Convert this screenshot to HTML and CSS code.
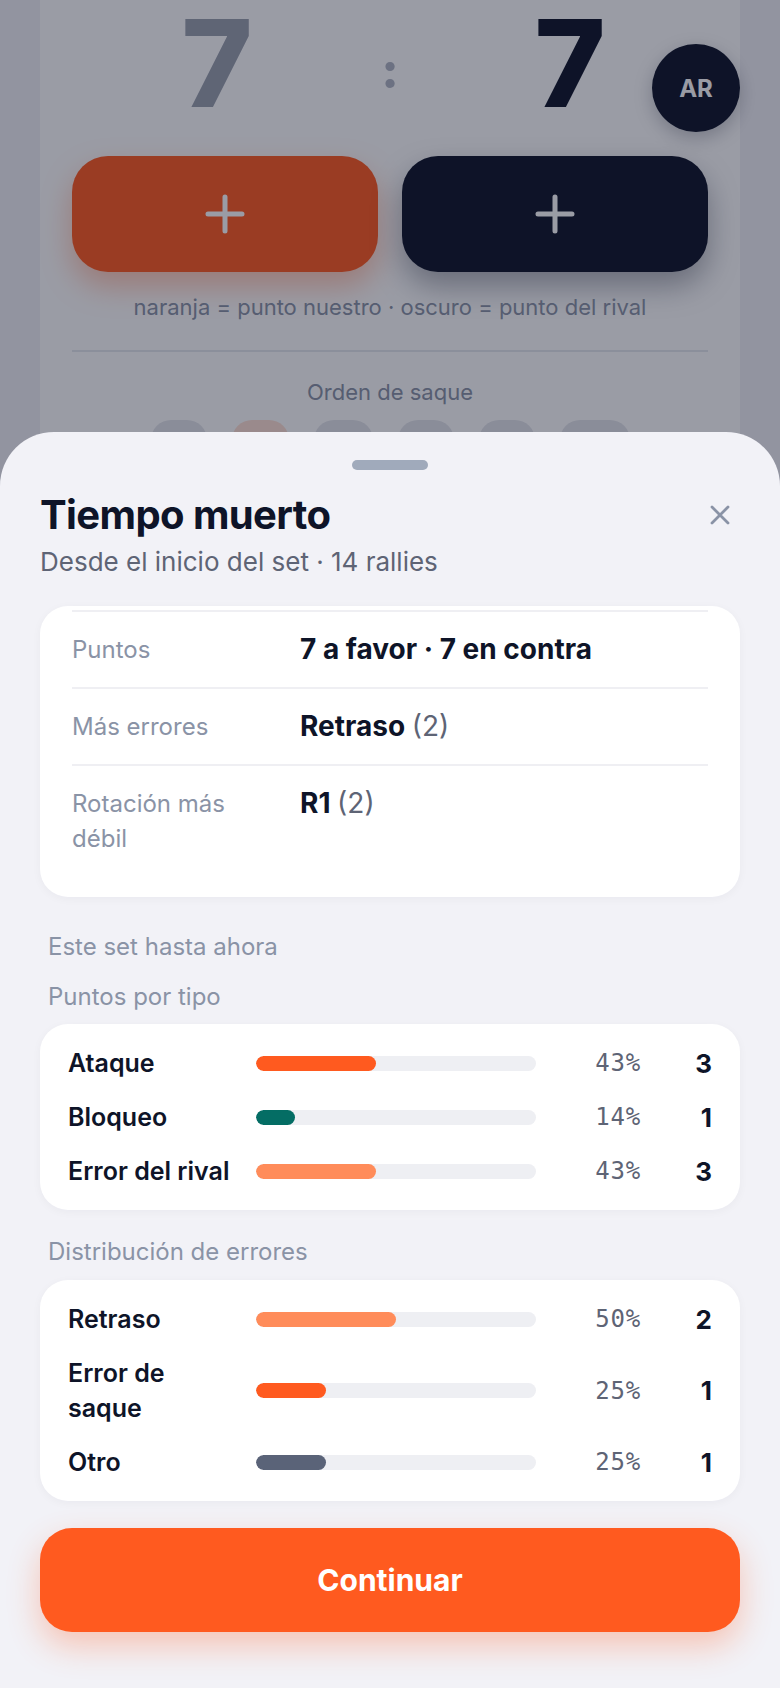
FILE: index.html
```html
<!DOCTYPE html>
<html lang="es">
<head>
<meta charset="utf-8">
<title>Tiempo muerto</title>
<link rel="stylesheet" href="styles.css">
</head>
<body>
<div class="app">
  <main class="match-card">
    <div class="score">
      <span class="score-num score-us">7</span>
      <span class="score-sep">:</span>
      <span class="score-num score-them">7</span>
    </div>
    <div class="avatar">AR</div>
    <div class="point-buttons">
      <button class="point-btn point-us" aria-label="Punto nuestro">
        <svg viewBox="0 0 40 40" width="40" height="40"><path d="M20 3v34M3 20h34" stroke="currentColor" stroke-width="5" stroke-linecap="round" fill="none"/></svg>
      </button>
      <button class="point-btn point-them" aria-label="Punto del rival">
        <svg viewBox="0 0 40 40" width="40" height="40"><path d="M20 3v34M3 20h34" stroke="currentColor" stroke-width="5" stroke-linecap="round" fill="none"/></svg>
      </button>
    </div>
    <p class="legend">naranja = punto nuestro · oscuro = punto del rival</p>
    <div class="divider"></div>
    <p class="serve-title">Orden de saque</p>
    <div class="serve-order">
      <span class="pill"></span>
      <span class="pill pill-active"></span>
      <span class="pill pill-w59"></span>
      <span class="pill"></span>
      <span class="pill"></span>
      <span class="pill pill-wide"></span>
    </div>
  </main>
</div>

<div class="scrim"></div>

<section class="sheet">
  <div class="handle"></div>
  <header class="sheet-head">
    <h1 class="sheet-title">Tiempo muerto</h1>
    <button class="close" aria-label="Cerrar">
      <svg viewBox="0 0 20 20" width="20" height="20"><path d="M2 2L18 18M18 2L2 18" stroke="currentColor" stroke-width="2.8" stroke-linecap="round" fill="none"/></svg>
    </button>
  </header>
  <p class="sheet-sub">Desde el inicio del set · 14 rallies</p>

  <div class="card summary">
    <div class="sum-row">
      <span class="sum-label">Puntos</span>
      <span class="sum-value">7 a favor · 7 en contra</span>
    </div>
    <div class="sum-row">
      <span class="sum-label">Más errores</span>
      <span class="sum-value">Retraso <span class="sum-muted">(2)</span></span>
    </div>
    <div class="sum-row">
      <span class="sum-label">Rotación más débil</span>
      <span class="sum-value">R1 <span class="sum-muted">(2)</span></span>
    </div>
  </div>

  <p class="section-label section-first">Este set hasta ahora</p>
  <p class="section-label section-sub">Puntos por tipo</p>
  <div class="card bars">
    <div class="bar-row">
      <span class="bar-label">Ataque</span>
      <span class="track"><span class="fill fill-orange" style="width:43%"></span></span>
      <span class="pct">43%</span>
      <span class="count">3</span>
    </div>
    <div class="bar-row">
      <span class="bar-label">Bloqueo</span>
      <span class="track"><span class="fill fill-teal" style="width:14%"></span></span>
      <span class="pct">14%</span>
      <span class="count">1</span>
    </div>
    <div class="bar-row">
      <span class="bar-label">Error del rival</span>
      <span class="track"><span class="fill fill-peach" style="width:43%"></span></span>
      <span class="pct">43%</span>
      <span class="count">3</span>
    </div>
  </div>

  <p class="section-label section-gap">Distribución de errores</p>
  <div class="card bars">
    <div class="bar-row">
      <span class="bar-label">Retraso</span>
      <span class="track"><span class="fill fill-peach" style="width:50%"></span></span>
      <span class="pct">50%</span>
      <span class="count">2</span>
    </div>
    <div class="bar-row">
      <span class="bar-label">Error de saque</span>
      <span class="track"><span class="fill fill-orange" style="width:25%"></span></span>
      <span class="pct">25%</span>
      <span class="count">1</span>
    </div>
    <div class="bar-row">
      <span class="bar-label">Otro</span>
      <span class="track"><span class="fill fill-slate" style="width:25%"></span></span>
      <span class="pct">25%</span>
      <span class="count">1</span>
    </div>
  </div>

  <button class="continue">Continuar</button>
</section>
</body>
</html>
```

FILE: styles.css
```css
* { box-sizing: border-box; }

html, body {
  margin: 0;
  padding: 0;
}

body {
  width: 780px;
  height: 1688px;
  overflow: hidden;
  position: relative;
  background: #f2f2f7;
  font-family: "Inter", "Noto Sans", sans-serif;
  color: #0e1428;
}

p { margin: 0; }

button {
  font-family: inherit;
  border: 0;
  padding: 0;
  cursor: pointer;
}

/* ---------- background page ---------- */
.app {
  padding: 0 40px;
}

.match-card {
  position: relative;
  background: #ffffff;
  border-radius: 0 0 32px 32px;
  padding: 3px 32px 40px;
  height: 560px;
}

.score {
  display: grid;
  grid-template-columns: 1fr 40px 1fr;
  align-items: center;
  height: 120px;
}

.score-num {
  font-size: 121px;
  line-height: 120px;
  font-weight: 800;
  text-align: center;
}

.score-us { color: #9aa0ad; margin-right: 8px; }
.score-them { color: #0e1428; margin-left: 22px; }

.score-sep {
  text-align: center;
  font-size: 50px;
  font-weight: 800;
  color: #b0b6c3;
  line-height: 1;
  padding-top: 14px;
}

.avatar {
  position: absolute;
  top: 44px;
  right: 0;
  width: 88px;
  height: 88px;
  border-radius: 50%;
  background: #0e1428;
  color: #ffffff;
  font-size: 24px;
  font-weight: 700;
  display: flex;
  align-items: center;
  justify-content: center;
  box-shadow: 0 6px 18px rgba(14, 20, 40, 0.25);
}

.point-buttons {
  margin-top: 33px;
  display: grid;
  grid-template-columns: 1fr 1fr;
  gap: 24px;
}

.point-btn {
  height: 116px;
  border-radius: 36px;
  display: flex;
  align-items: center;
  justify-content: center;
  color: #ffffff;
}

.point-us {
  background: #ff5a1f;
  box-shadow: 0 14px 30px rgba(255, 90, 31, 0.35);
}

.point-them {
  background: #0e1428;
  box-shadow: 0 14px 30px rgba(14, 20, 40, 0.35);
}

.legend {
  margin-top: 20px;
  text-align: center;
  font-size: 22px;
  line-height: 30px;
  color: #8a93a6;
}

.divider {
  margin-top: 28px;
  height: 2px;
  background: #e6e8ee;
}

.serve-title {
  margin-top: 25px;
  text-align: center;
  font-size: 22px;
  line-height: 30px;
  color: #8a93a6;
}

.serve-order {
  margin-top: 13px;
  display: flex;
  justify-content: center;
  gap: 25px;
}

.pill {
  width: 56px;
  height: 52px;
  border-radius: 20px;
  background: #e4e6eb;
}

.pill-active { width: 57px; background: #ffe1d4; }
.pill-w59 { width: 59px; }
.pill-wide { width: 70px; }

/* ---------- scrim ---------- */
.scrim {
  position: absolute;
  inset: 0;
  background: rgba(14, 20, 40, 0.42);
}

/* ---------- sheet ---------- */
.sheet {
  position: absolute;
  left: 0;
  right: 0;
  top: 432px;
  min-height: 1256px;
  background: #f2f2f7;
  border-radius: 54px 54px 0 0;
  padding: 28px 40px 40px;
}

.handle {
  width: 76px;
  height: 10px;
  border-radius: 5px;
  background: #a0aabb;
  margin: 0 auto;
}

.sheet-head {
  margin-top: 21px;
  display: flex;
  align-items: center;
  justify-content: space-between;
}

.sheet-title {
  margin: 0;
  font-size: 40px;
  line-height: 48px;
  font-weight: 700;
  letter-spacing: -0.6px;
  color: #0e1428;
}

.close {
  width: 40px;
  height: 40px;
  background: transparent;
  color: #8a93a6;
  display: flex;
  align-items: center;
  justify-content: center;
}

.sheet-sub {
  margin-top: 6px;
  font-size: 26px;
  line-height: 34px;
  color: #5e6475;
}

.card {
  background: #ffffff;
  border-radius: 28px;
  box-shadow: 0 2px 10px rgba(14, 20, 40, 0.04);
}

.summary {
  margin-top: 27px;
  padding: 4px 32px 21px;
}

.sum-row {
  display: grid;
  grid-template-columns: 200px 1fr;
  column-gap: 28px;
  border-top: 2px solid #efeff3;
  padding: 20px 0;
  align-items: start;
}

.sum-label {
  font-size: 24px;
  line-height: 35px;
  color: #8a93a6;
}

.sum-value {
  font-size: 28px;
  line-height: 35px;
  font-weight: 700;
  color: #0e1428;
}

.sum-muted {
  font-weight: 400;
  color: #5e6475;
}

.section-label {
  font-size: 24px;
  line-height: 35px;
  color: #8a93a6;
  padding-left: 8px;
}

.section-first { margin-top: 32px; }
.section-sub { margin-top: 15px; }
.section-gap { margin-top: 24px; }

.bars {
  margin-top: 10px;
  padding: 12px 28px;
}

.section-gap + .bars { margin-top: 11px; }

.bar-row {
  display: grid;
  grid-template-columns: 172px 280px 89px 55px;
  column-gap: 16px;
  align-items: center;
  padding: 9.5px 0;
}

.bar-label {
  font-size: 25px;
  line-height: 35px;
  font-weight: 600;
  color: #0e1428;
}

.track {
  display: block;
  height: 15px;
  border-radius: 8px;
  background: #eeeff3;
  overflow: hidden;
}

.fill {
  display: block;
  height: 100%;
  border-radius: 8px;
}

.fill-orange { background: #ff5a1f; }
.fill-peach { background: #ff8c5a; }
.fill-teal { background: #046d64; }
.fill-slate { background: #5a6378; }

.pct {
  text-align: right;
  font-family: "DejaVu Sans Mono", monospace;
  font-size: 24px;
  letter-spacing: 0.8px;
  color: #5e6475;
}

.count {
  text-align: right;
  font-size: 26px;
  font-weight: 700;
  color: #0e1428;
}

.continue {
  margin-top: 27px;
  width: 100%;
  height: 104px;
  border-radius: 32px;
  background: #ff5a1f;
  color: #ffffff;
  font-size: 30px;
  font-weight: 700;
  box-shadow: 0 14px 32px rgba(255, 90, 31, 0.3);
}
```
